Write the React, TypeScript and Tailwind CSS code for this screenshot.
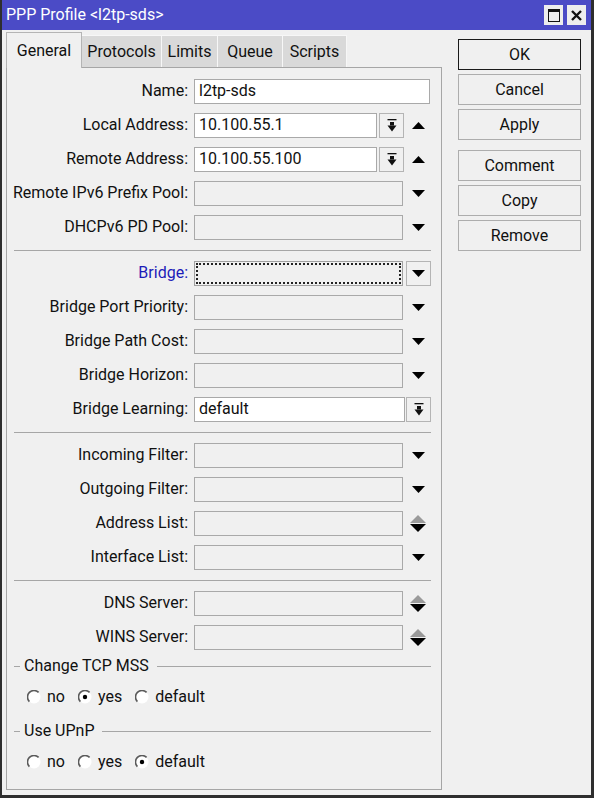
import React from 'react';

type Kind = 'text' | 'combo' | 'drop' | 'bridge' | 'select' | 'spin';

const fields: ({ label: string; kind: Kind; value?: string; blue?: boolean } | 'sep')[] = [
  { label: 'Name', kind: 'text', value: 'l2tp-sds' },
  { label: 'Local Address', kind: 'combo', value: '10.100.55.1' },
  { label: 'Remote Address', kind: 'combo', value: '10.100.55.100' },
  { label: 'Remote IPv6 Prefix Pool', kind: 'drop' },
  { label: 'DHCPv6 PD Pool', kind: 'drop' },
  'sep',
  { label: 'Bridge', kind: 'bridge', blue: true },
  { label: 'Bridge Port Priority', kind: 'drop' },
  { label: 'Bridge Path Cost', kind: 'drop' },
  { label: 'Bridge Horizon', kind: 'drop' },
  { label: 'Bridge Learning', kind: 'select', value: 'default' },
  'sep',
  { label: 'Incoming Filter', kind: 'drop' },
  { label: 'Outgoing Filter', kind: 'drop' },
  { label: 'Address List', kind: 'spin' },
  { label: 'Interface List', kind: 'drop' },
  'sep',
  { label: 'DNS Server', kind: 'spin' },
  { label: 'WINS Server', kind: 'spin' },
];

function BarArrow() {
  return (
    <svg width="10" height="13" viewBox="0 0 10 13">
      <rect x="0.5" y="0" width="9" height="1.3" fill="#111" />
      <rect x="3" y="3" width="4" height="3.5" fill="#111" />
      <path d="M0.5 6.5 H9.5 L5 12.5 Z" fill="#111" />
    </svg>
  );
}

function Tri({ up, color = '#000', w = 13, h = 7 }: { up?: boolean; color?: string; w?: number; h?: number }) {
  return (
    <svg width={w} height={h} viewBox={`0 0 ${w} ${h}`}>
      <path d={up ? `M0 ${h} L${w / 2} 0 L${w} ${h} Z` : `M0 0 L${w} 0 L${w / 2} ${h} Z`} fill={color} />
    </svg>
  );
}

function SmallButton({ children }: { children: React.ReactNode }) {
  return (
    <div className="flex h-[25px] w-[25px] items-center justify-center border border-[#b4b4b4] bg-[#f0f0f0]">
      {children}
    </div>
  );
}

function Field({ kind, value }: { kind: Kind; value?: string }) {
  const white = 'flex h-[25px] items-center border border-[#a9a9a9] bg-white pl-[4px]';
  const gray = 'h-[25px] w-[209px] border border-[#a9a9a9] bg-[#f0f0f0]';
  switch (kind) {
    case 'text':
      return <div className={`${white} w-[236px]`}>{value}</div>;
    case 'combo':
      return (
        <div className="flex items-center">
          <div className={`${white} w-[183px]`}>{value}</div>
          <div className="ml-[2px]">
            <SmallButton>
              <BarArrow />
            </SmallButton>
          </div>
          <div className="ml-[8px] flex">
            <Tri up />
          </div>
        </div>
      );
    case 'drop':
      return (
        <div className="flex items-center">
          <div className={gray} />
          <div className="ml-[9px] flex">
            <Tri />
          </div>
        </div>
      );
    case 'bridge':
      return (
        <div className="flex items-center">
          <div className="h-[25px] w-[209px] border border-[#a0a0a0] bg-[#f0f0f0] p-px">
            <div className="h-full w-full border-2 border-dotted border-[#222]" />
          </div>
          <div className="ml-[3px]">
            <SmallButton>
              <Tri />
            </SmallButton>
          </div>
        </div>
      );
    case 'select':
      return (
        <div className="flex items-center">
          <div className={`${white} w-[211px]`}>{value}</div>
          <div className="ml-px">
            <SmallButton>
              <BarArrow />
            </SmallButton>
          </div>
        </div>
      );
    case 'spin':
      return (
        <div className="flex items-center">
          <div className={gray} />
          <div className="ml-[7px] flex flex-col gap-px">
            <Tri up color="#9a9a9a" w={16} h={8} />
            <Tri w={16} h={8} />
          </div>
        </div>
      );
  }
}

function Separator() {
  return (
    <div className="flex h-[12px] items-center pl-[7px] pr-[10px]">
      <div className="h-px w-full bg-[#a6a6a6]" />
    </div>
  );
}

function Radio({ checked }: { checked?: boolean }) {
  return (
    <svg width="14" height="14" viewBox="0 0 14 14">
      <circle cx="7" cy="7" r="6.5" fill="#fff" />
      <path d="M2.4 11.6 A6.5 6.5 0 0 1 11.6 2.4" stroke="#5a5a5a" strokeWidth="1.6" fill="none" />
      {checked && <circle cx="7" cy="7" r="2.2" fill="#000" />}
    </svg>
  );
}

function Group({ title, selected, headH, rowH }: { title: string; selected: string; headH: string; rowH: string }) {
  return (
    <div>
      <div className={`flex items-center ${headH}`}>
        <div className="ml-[7px] h-px w-[6px] bg-[#a6a6a6]" />
        <span className="ml-[4px]">{title}</span>
        <div className="ml-[8px] mr-[10px] h-px flex-1 bg-[#a6a6a6]" />
      </div>
      <div className={`flex items-center gap-[13px] pl-[20px] ${rowH}`}>
        {['no', 'yes', 'default'].map((o) => (
          <div key={o} className="flex items-center gap-[6px]">
            <Radio checked={o === selected} />
            <span>{o}</span>
          </div>
        ))}
      </div>
    </div>
  );
}

const tabs = [
  { name: 'Protocols', w: 'w-[80px]' },
  { name: 'Limits', w: 'w-[56px]' },
  { name: 'Queue', w: 'w-[65px]' },
  { name: 'Scripts', w: 'w-[64px]' },
];

export default function App() {
  return (
    <div className="flex h-[798px] w-[594px] flex-col border-b-[3px] border-l-2 border-r-[3px] border-[#2e2e2e] bg-[#f0f0f0] font-['Roboto','Liberation_Sans',Arial,sans-serif] text-[16px] leading-none text-[#111]">
      {/* title bar */}
      <div className="flex h-[30px] shrink-0 items-center bg-[#4b4bc6] pl-[4px] pr-[5px]">
        <span className="text-[16px] text-white">PPP Profile &lt;l2tp-sds&gt;</span>
        <div className="ml-auto flex gap-[4px]">
          <div className="flex h-[20px] w-[19px] items-center justify-center bg-[#ededed]">
            <div className="h-[13px] w-[12px] border border-t-[3px] border-[#111]" />
          </div>
          <div className="flex h-[20px] w-[19px] items-center justify-center bg-[#ededed]">
            <svg width="11" height="11" viewBox="0 0 11 11">
              <path d="M1 1 L10 10 M10 1 L1 10" stroke="#111" strokeWidth="2.4" />
            </svg>
          </div>
        </div>
      </div>

      <div className="flex flex-1">
        {/* left: tabs + panel */}
        <div className="ml-[4px] flex w-[436px] flex-col">
          <div className="flex h-[37px] items-end">
            <div className="relative z-10 -mb-px flex h-[36px] w-[76px] items-center justify-center border-l border-r border-t border-[#b4b4b4] bg-[#f0f0f0]">
              General
            </div>
            {tabs.map((t) => (
              <div
                key={t.name}
                className={`flex h-[32px] ${t.w} items-center justify-center border-r border-t border-[#f7f7f7] bg-[#d9d9d9]`}
              >
                {t.name}
              </div>
            ))}
          </div>

          <div className="h-[723px] border border-[#a6a6a6] pt-[6px]">
            {fields.map((f, i) =>
              f === 'sep' ? (
                <Separator key={i} />
              ) : (
                <div key={f.label} className="flex h-[34px] items-center">
                  <div className={`w-[181px] text-right ${f.blue ? 'text-[#1c1cb8]' : ''}`}>{f.label}:</div>
                  <div className="ml-[6px]">
                    <Field kind={f.kind} value={f.value} />
                  </div>
                </div>
              )
            )}
            <Group title="Change TCP MSS" selected="yes" headH="h-[24px]" rowH="h-[38px]" />
            <Group title="Use UPnP" selected="default" headH="h-[30px]" rowH="h-[32px]" />
          </div>
        </div>

        {/* right: buttons */}
        <div className="ml-[16px] flex flex-col gap-[4px] pt-[9px]">
          {['OK', 'Cancel', 'Apply', 'Comment', 'Copy', 'Remove'].map((b) => (
            <div
              key={b}
              className={`flex h-[31px] w-[123px] items-center justify-center border bg-[#f0f0f0] ${
                b === 'OK' ? 'border-[#1a1a1a]' : 'border-[#adadad]'
              } ${b === 'Comment' ? 'mt-[6px]' : ''}`}
            >
              {b}
            </div>
          ))}
        </div>
      </div>
    </div>
  );
}
